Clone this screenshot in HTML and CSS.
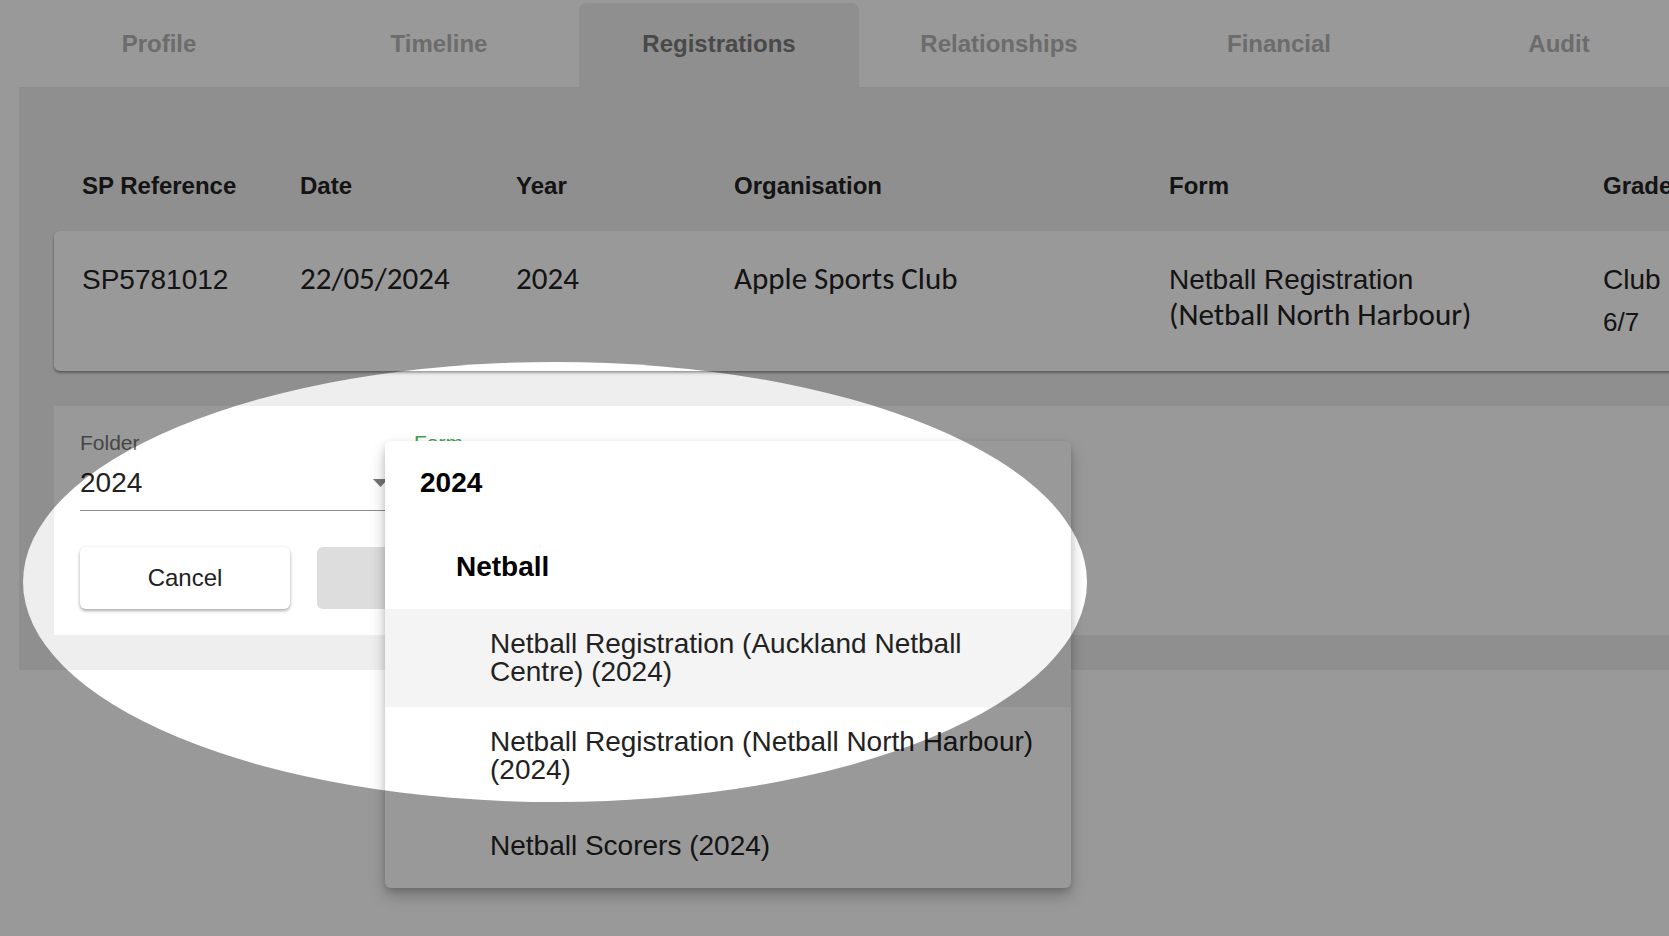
FILE: index.html
```html
<!DOCTYPE html>
<html lang="en">
<head>
<meta charset="utf-8">
<title>Registrations</title>
<link rel="stylesheet" href="styles.css">
</head>
<body>
<div class="page">
  <nav class="tabs">
    <div class="tab">Profile</div>
    <div class="tab">Timeline</div>
    <div class="tab active">Registrations</div>
    <div class="tab">Relationships</div>
    <div class="tab">Financial</div>
    <div class="tab">Audit</div>
  </nav>

  <main class="panel">
    <div class="grid thead">
      <div>SP Reference</div>
      <div>Date</div>
      <div>Year</div>
      <div>Organisation</div>
      <div>Form</div>
      <div>Grade</div>
    </div>
    <div class="grid row-card">
      <div class="arial">SP5781012</div>
      <div class="calibri">22/05/2024</div>
      <div class="calibri">2024</div>
      <div class="calibri">Apple Sports Club</div>
      <div>
        <span class="line arial">Netball Registration</span>
        <span class="line calibri tight">(Netball North Harbour)</span>
      </div>
      <div>
        <span class="line arial">Club</span>
        <span class="line arial small">6/7</span>
      </div>
    </div>

    <section class="form-card">
      <div class="fields">
        <div class="field">
          <div class="label">Folder</div>
          <div class="value">
            <span>2024</span>
            <svg class="arrow" width="15" height="8" viewBox="0 0 15 8"><path d="M0 0h15L7.5 8z" fill="#757575"/></svg>
          </div>
        </div>
        <div class="field">
          <div class="label focused">Form</div>
          <div class="value"><span>&nbsp;</span></div>
        </div>
      </div>
      <div class="actions">
        <button class="btn cancel">Cancel</button>
        <button class="btn next" disabled>Next</button>
      </div>
    </section>
  </main>

  <div class="menu">
    <div class="group g1">2024</div>
    <div class="group g2">Netball</div>
    <div class="item hover">Netball Registration (Auckland Netball Centre) (2024)</div>
    <div class="item">Netball Registration (Netball North Harbour) (2024)</div>
    <div class="item single">Netball Scorers (2024)</div>
  </div>

  <div class="spotlight"></div>
</div>
</body>
</html>
```

FILE: styles.css
```css
html, body {
  margin: 0;
  padding: 0;
  background: #fff;
  overflow: hidden;
}

body {
  font-family: "Liberation Sans", Arial, sans-serif;
  color: #212121;
}

.page {
  position: relative;
  width: 1720px;
  height: 936px;
  overflow: hidden;
}

/* Tabs */
.tabs {
  display: flex;
  height: 87px;
  padding-left: 19px;
}

.tab {
  flex: 0 0 280px;
  height: 87px;
  line-height: 87px;
  text-align: center;
  font-weight: bold;
  font-size: 24px;
  color: #b4b4b4;
}

.tab.active {
  margin-top: 3px;
  height: 84px;
  line-height: 81px;
  background: #eeeeee;
  border-radius: 8px 8px 0 0;
  color: #7b7b7b;
}

/* Panel */
.panel {
  margin-left: 19px;
  background: #eeeeee;
  padding: 0 0 35px 35px;
  height: 548px;
}

.grid {
  display: grid;
  grid-template-columns: 218px 216px 218px 435px 434px 300px;
  padding-left: 28px;
}

.thead {
  padding-top: 85px;
  padding-bottom: 31px;
  font-weight: bold;
  font-size: 24px;
  line-height: 28px;
  color: #222;
}

.row-card {
  background: #fff;
  height: 140px;
  box-sizing: border-box;
  padding-top: 29px;
  border-radius: 6px;
  box-shadow: 0 2px 3px rgba(0, 0, 0, 0.3), 0 1px 2px rgba(0, 0, 0, 0.12);
  line-height: 36px;
  color: #222;
}

.arial {
  font-family: "Liberation Sans", Arial, sans-serif;
  font-size: 28px;
  line-height: 40px;
}

.calibri {
  font-family: "Carlito", "Lato", sans-serif;
  font-size: 31px;
}

.line {
  display: block;
  line-height: 40px;
}

.line.tight {
  line-height: 28px;
}

.line.small {
  font-size: 26px;
  line-height: 44px;
}

/* Form card */
.form-card {
  margin-top: 35px;
  background: #fff;
  height: 229px;
  box-sizing: border-box;
  padding: 25px 0 0 26px;
}

.fields {
  display: flex;
  gap: 24px;
}

.field {
  width: 310px;
}

.label {
  font-size: 21px;
  line-height: 24px;
  color: #757575;
}

.label.focused {
  color: #43a047;
}

.value {
  display: flex;
  align-items: center;
  justify-content: space-between;
  margin-top: 10px;
  padding-bottom: 9px;
  border-bottom: 1px solid #8c8c8c;
  font-size: 28px;
  line-height: 36px;
  color: #222;
}

.arrow {
  margin-right: 2px;
}

.actions {
  display: flex;
  gap: 27px;
  margin-top: 36px;
}

.btn {
  width: 210px;
  height: 62px;
  border: none;
  border-radius: 6px;
  font-family: "Liberation Sans", Arial, sans-serif;
  font-size: 24px;
  color: #222;
  padding: 0;
}

.cancel {
  background: #fff;
  box-shadow: 0 2px 3px rgba(0, 0, 0, 0.25), 0 1px 5px rgba(0, 0, 0, 0.12);
}

.next {
  background: #dddddd;
  color: #a0a0a0;
}

/* Dropdown menu */
.menu {
  position: absolute;
  left: 385px;
  top: 441px;
  width: 686px;
  height: 447px;
  box-sizing: border-box;
  padding-bottom: 3px;
  background: #fff;
  border-radius: 6px;
  box-shadow: 0 8px 16px rgba(0, 0, 0, 0.22), 0 3px 6px rgba(0, 0, 0, 0.14);
  overflow: hidden;
}

.group {
  height: 84px;
  display: flex;
  align-items: center;
  font-weight: bold;
  font-size: 28px;
  line-height: 28.5px;
  color: #000;
}

.g1 { padding-left: 35px; }
.g2 { padding-left: 71px; }

.item {
  padding: 20.5px 24px 20.5px 105px;
  font-size: 28px;
  line-height: 28.5px;
  color: #222;
}

.item.hover {
  background: #f4f4f4;
}

.item.single {
  box-sizing: border-box;
  min-height: 80px;
  display: flex;
  align-items: center;
  padding-top: 2px;
  padding-bottom: 0;
}

/* Spotlight overlay */
.spotlight {
  position: absolute;
  left: 23px;
  top: 362px;
  width: 1064px;
  height: 440px;
  border-radius: 50%;
  box-shadow: 0 0 0 3000px rgba(0, 0, 0, 0.4);
  pointer-events: none;
}
```
